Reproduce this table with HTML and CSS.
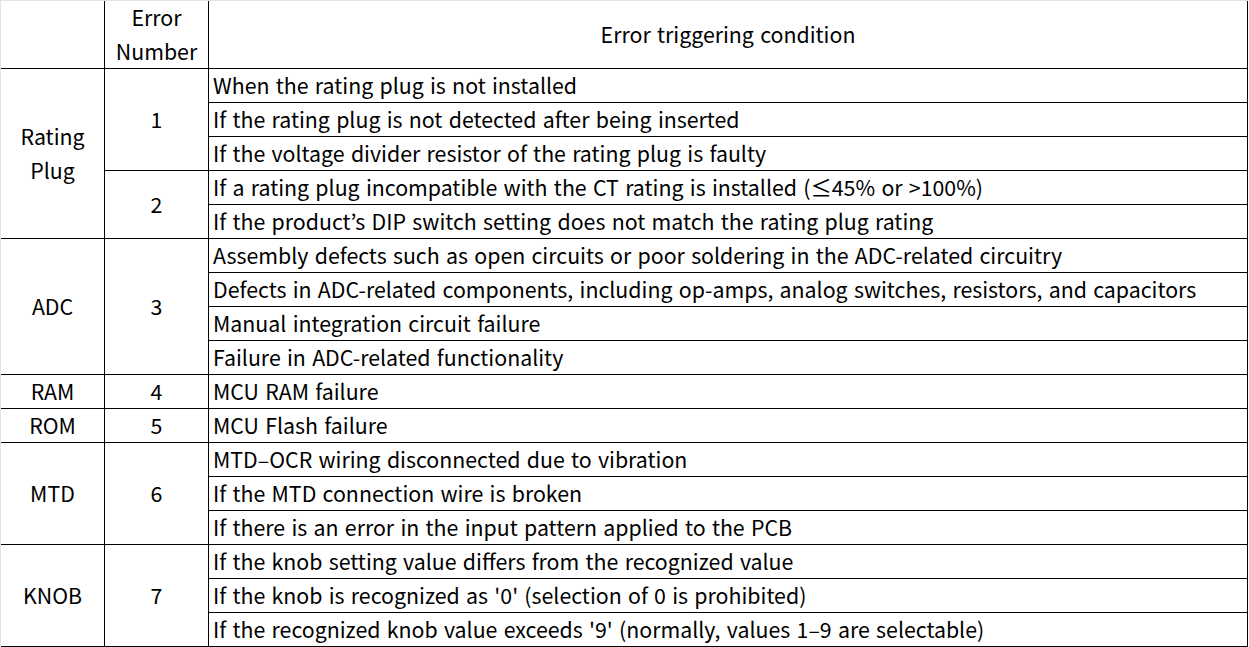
FILE: index.html
```html
<!DOCTYPE html>
<html>
<head>
<meta charset="utf-8">
<link rel="stylesheet" href="styles.css">
</head>
<body>
<div class="grid">
  <div class="cell c1 hdr"></div>
  <div class="cell c2 hdr center">Error<br>Number</div>
  <div class="cell c3 hdr center">Error triggering condition</div>

  <div class="cell c1 center r-rating">Rating<br>Plug</div>
  <div class="cell c2 center r-e1">1</div>
  <div class="cell c3">When the rating plug is not installed</div>
  <div class="cell c3">If the rating plug is not detected after being inserted</div>
  <div class="cell c3">If the voltage divider resistor of the rating plug is faulty</div>
  <div class="cell c2 center r-e2">2</div>
  <div class="cell c3">If a rating plug incompatible with the CT rating is installed (≤45% or &gt;100%)</div>
  <div class="cell c3">If the product’s DIP switch setting does not match the rating plug rating</div>

  <div class="cell c1 center span4">ADC</div>
  <div class="cell c2 center span4">3</div>
  <div class="cell c3">Assembly defects such as open circuits or poor soldering in the ADC-related circuitry</div>
  <div class="cell c3">Defects in ADC-related components, including op-amps, analog switches, resistors, and capacitors</div>
  <div class="cell c3">Manual integration circuit failure</div>
  <div class="cell c3">Failure in ADC-related functionality</div>

  <div class="cell c1 center">RAM</div>
  <div class="cell c2 center">4</div>
  <div class="cell c3">MCU RAM failure</div>

  <div class="cell c1 center">ROM</div>
  <div class="cell c2 center">5</div>
  <div class="cell c3">MCU Flash failure</div>

  <div class="cell c1 center span3">MTD</div>
  <div class="cell c2 center span3">6</div>
  <div class="cell c3">MTD–OCR wiring disconnected due to vibration</div>
  <div class="cell c3">If the MTD connection wire is broken</div>
  <div class="cell c3">If there is an error in the input pattern applied to the PCB</div>

  <div class="cell c1 center span3">KNOB</div>
  <div class="cell c2 center span3">7</div>
  <div class="cell c3">If the knob setting value differs from the recognized value</div>
  <div class="cell c3">If the knob is recognized as '0' (selection of 0 is prohibited)</div>
  <div class="cell c3">If the recognized knob value exceeds '9' (normally, values 1–9 are selectable)</div>
</div>
</body>
</html>
```
FILE: styles.css
```css
html, body {
  margin: 0;
  padding: 0;
  background: #ffffff;
}
.grid {
  display: grid;
  grid-template-columns: 104px 104px 1039px;
  grid-template-rows: 68px repeat(17, 34px);
  grid-auto-flow: row dense;
  width: 1247px;
  border-top: 1px solid #e3e3e3;
  border-left: 1px solid #e3e3e3;
  font-family: "Noto Sans CJK KR", "Noto Sans", sans-serif;
  font-size: 21.33px;
  word-spacing: 1.5px;
  line-height: 34px;
  color: #000;
}
.cell {
  box-sizing: border-box;
  border-right: 1px solid #000;
  border-bottom: 1px solid #000;
  display: flex;
  flex-direction: column;
  justify-content: center;
  padding-left: 4px;
  padding-bottom: 2px;
  white-space: nowrap;
}
.center {
  align-items: center;
  text-align: center;
  padding-left: 0;
}
.c1 { grid-column: 1; }
.c2 { grid-column: 2; }
.c3 { grid-column: 3; }
.hdr { grid-row: 1; }
.r-rating { grid-row: span 5; }
.r-e1 { grid-row: span 3; }
.r-e2 { grid-row: span 2; }
.span4 { grid-row: span 4; }
.span3 { grid-row: span 3; }
```
